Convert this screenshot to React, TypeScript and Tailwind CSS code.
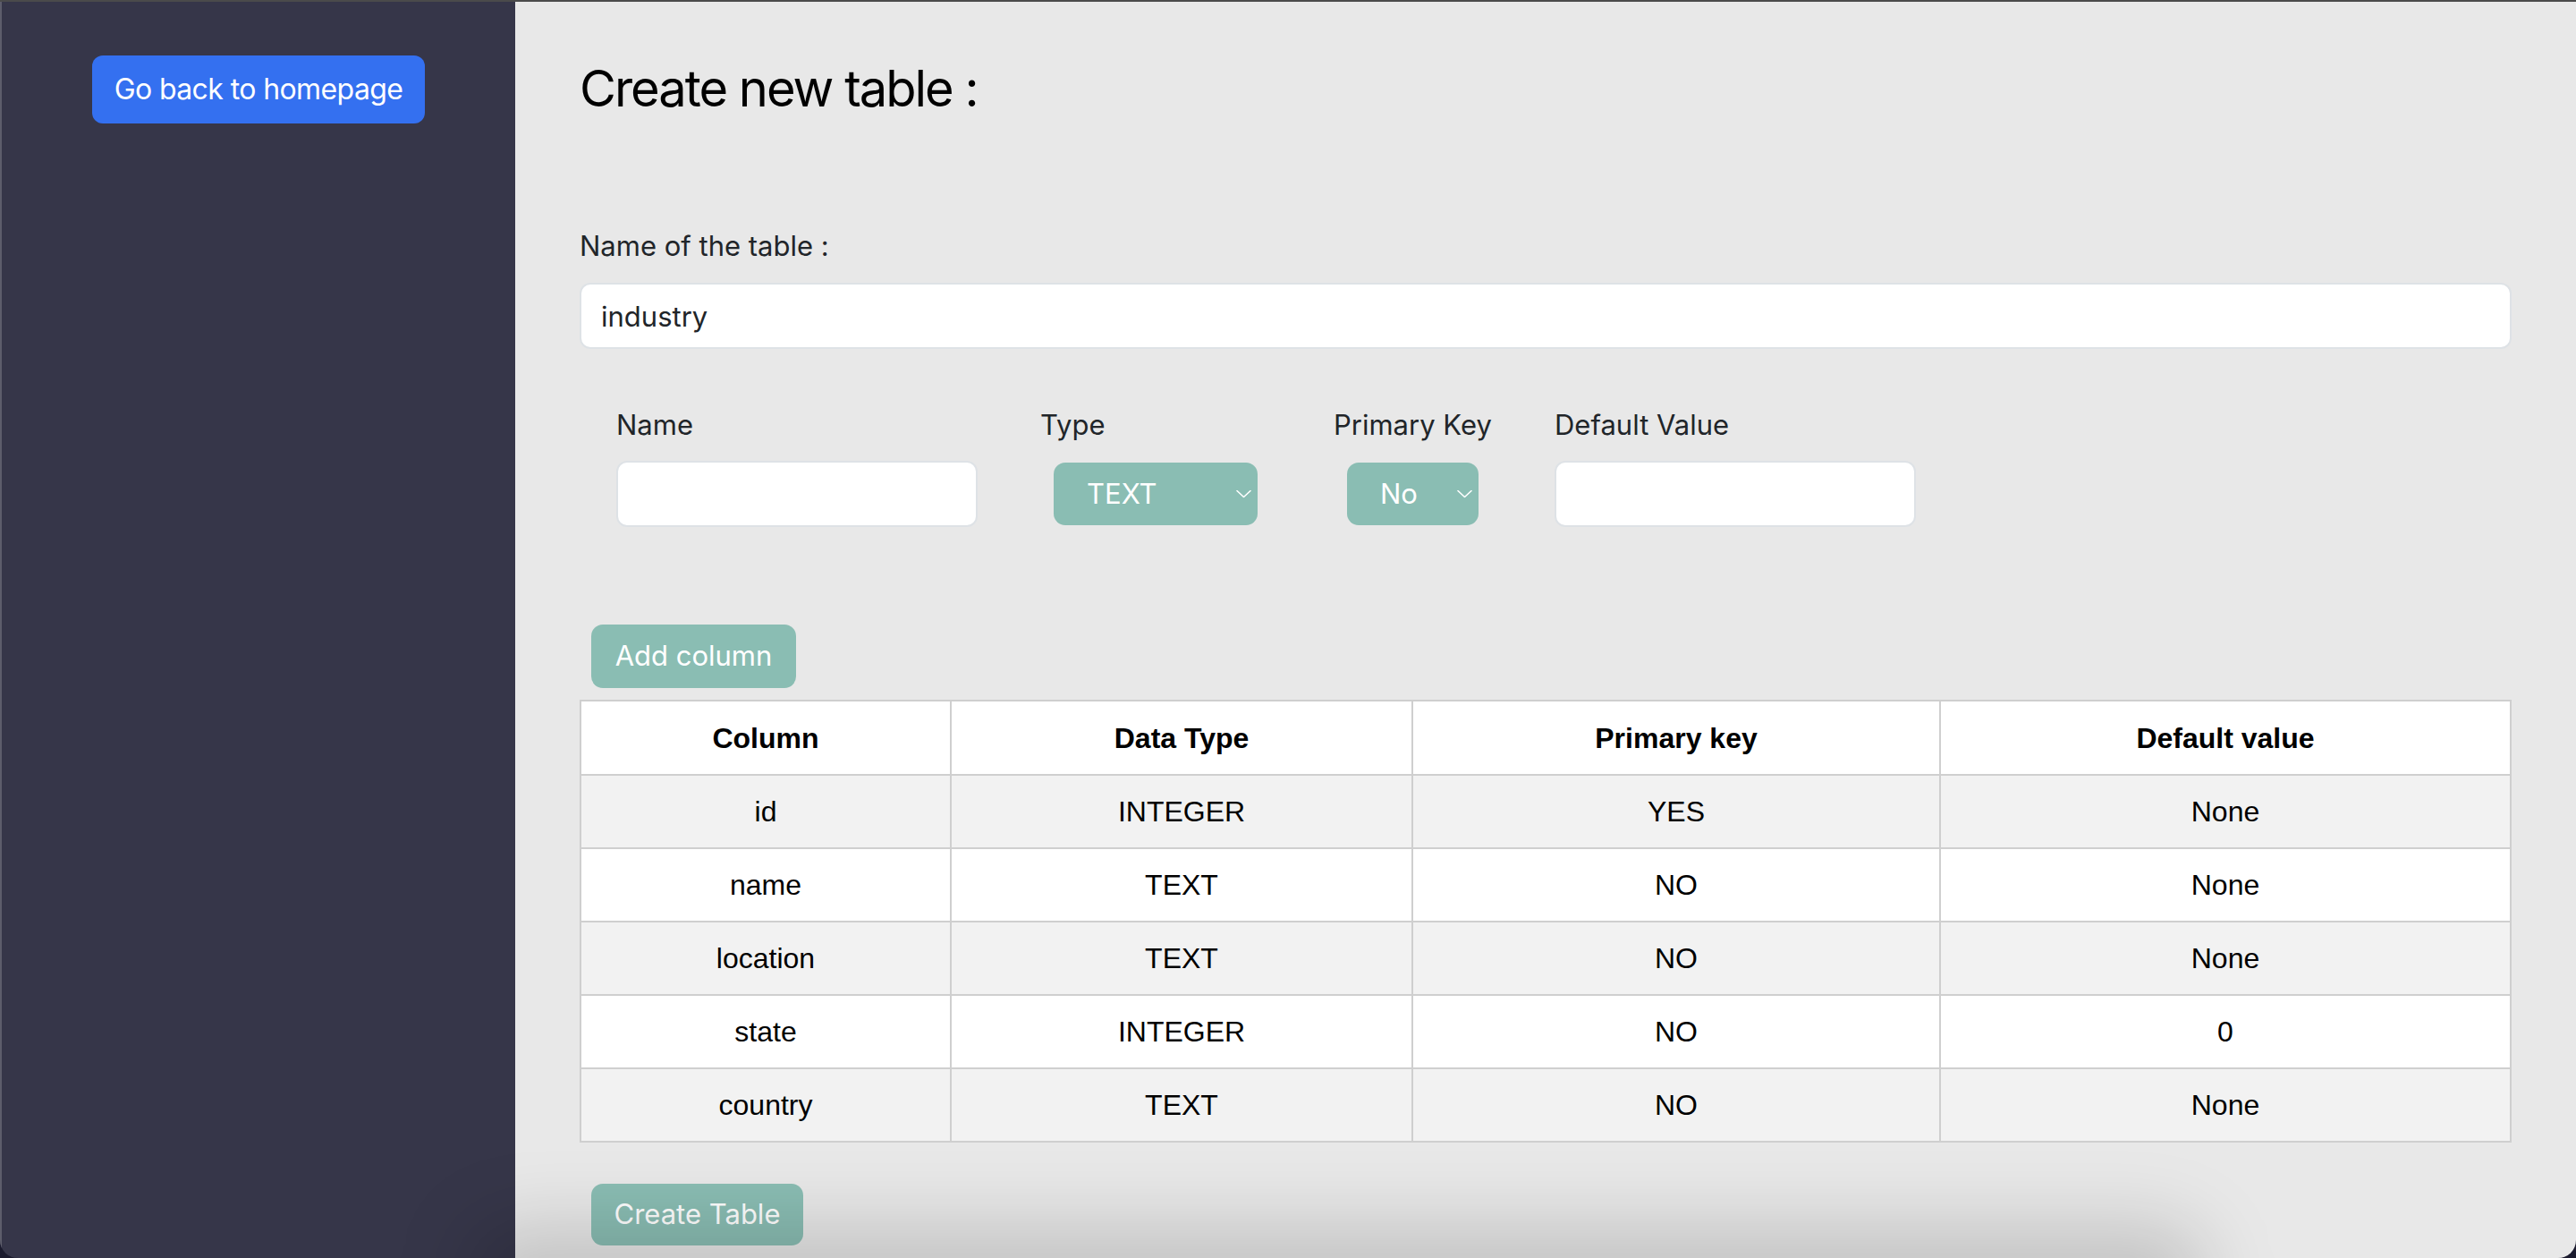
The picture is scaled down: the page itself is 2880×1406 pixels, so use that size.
import { useState } from "react";

type Row = {
  column: string;
  dataType: string;
  primaryKey: string;
  defaultValue: string;
};

const rows: Row[] = [
  { column: "id", dataType: "INTEGER", primaryKey: "YES", defaultValue: "None" },
  { column: "name", dataType: "TEXT", primaryKey: "NO", defaultValue: "None" },
  { column: "location", dataType: "TEXT", primaryKey: "NO", defaultValue: "None" },
  { column: "state", dataType: "INTEGER", primaryKey: "NO", defaultValue: "0" },
  { column: "country", dataType: "TEXT", primaryKey: "NO", defaultValue: "None" },
];

const sans = "font-['Inter','Noto_Sans',sans-serif]";

function Chevron() {
  return (
    <svg
      className="pointer-events-none absolute right-[7px] top-1/2 h-[9px] w-[17px] -translate-y-1/2"
      fill="none"
      stroke="white"
      strokeLinecap="round"
      strokeLinejoin="round"
      strokeWidth="1.6"
      viewBox="0 0 17 9"
    >
      <path d="M1 1l7.5 7L16 1" />
    </svg>
  );
}

type SelectProps = {
  className: string;
  options: string[];
  value: string;
  onChange: (value: string) => void;
};

function TealSelect({ className, options, value, onChange }: SelectProps) {
  return (
    <div className={`relative mx-[15px] h-[70px] ${className}`}>
      <select
        className="h-full w-full appearance-none rounded-[13px] bg-[#8abdb3] pl-[37px] text-[31px] text-white outline-none"
        onChange={(event) => onChange(event.target.value)}
        value={value}
      >
        {options.map((option) => (
          <option key={option} value={option}>
            {option}
          </option>
        ))}
      </select>
      <Chevron />
    </div>
  );
}

export default function App() {
  const [tableName, setTableName] = useState("industry");
  const [colName, setColName] = useState("");
  const [colType, setColType] = useState("TEXT");
  const [primary, setPrimary] = useState("No");
  const [defaultValue, setDefaultValue] = useState("");

  return (
    <div className={`h-[1406px] w-full bg-[#1b1b2e] ${sans}`}>
      <div className="relative flex h-full overflow-hidden rounded-b-[20px] border-t-2 border-[#4b4b4b]">
        <aside className="flex w-[576px] shrink-0 justify-center border-l-2 border-[#5d5d6b] bg-[#363649] pt-[60px]">
          <button
            className="h-[76px] w-[372px] rounded-[12px] bg-[#3470f0] text-[32px] tracking-[-0.6px] text-white"
            type="button"
          >
            Go back to homepage
          </button>
        </aside>

        <main className="flex-1 bg-[#e8e8e8] pl-[72px] pr-[72px] pt-[64px] text-[#212529]">
          <h1 className="text-[56px] leading-[1.2] tracking-[-2px] text-black">Create new table :</h1>

          <label className="mt-[118px] block text-[31px] leading-[48px]" htmlFor="table-name">
            Name of the table :
          </label>
          <input
            className="mt-[17px] h-[74px] w-full rounded-[12px] border-2 border-[#dee2e6] bg-white px-[22px] text-[31px] outline-none"
            id="table-name"
            onChange={(event) => setTableName(event.target.value)}
            value={tableName}
          />

          <div className="mt-[61px] flex gap-[70px] pl-[41px]">
            <div>
              <p className="mb-[16px] text-[31px] leading-[48px]">Name</p>
              <input
                className="h-[74px] w-[404px] rounded-[12px] border-2 border-[#dee2e6] bg-white px-[22px] text-[31px] outline-none"
                onChange={(event) => setColName(event.target.value)}
                value={colName}
              />
            </div>
            <div>
              <p className="mb-[16px] text-[31px] leading-[48px]">Type</p>
              <div className="flex h-[74px] items-center">
                <TealSelect
                  className="w-[228px]"
                  onChange={setColType}
                  options={["TEXT", "INTEGER", "REAL", "BLOB"]}
                  value={colType}
                />
              </div>
            </div>
            <div>
              <p className="mb-[16px] text-[31px] leading-[48px]">Primary Key</p>
              <div className="flex h-[74px] items-center">
                <TealSelect className="w-[147px]" onChange={setPrimary} options={["No", "Yes"]} value={primary} />
              </div>
            </div>
            <div>
              <p className="mb-[16px] text-[31px] leading-[48px]">Default Value</p>
              <input
                className="h-[74px] w-[404px] rounded-[12px] border-2 border-[#dee2e6] bg-white px-[22px] text-[31px] outline-none"
                onChange={(event) => setDefaultValue(event.target.value)}
                value={defaultValue}
              />
            </div>
          </div>

          <button
            className="ml-[13px] mt-[109px] h-[71px] w-[229px] rounded-[13px] bg-[#8abdb3] text-[31px] text-white"
            type="button"
          >
            Add column
          </button>

          <table className="mt-[13px] w-full border-collapse border-2 border-[#cfcfcf] font-['Liberation_Sans',Arial,sans-serif] text-[32px] text-black">
            <thead>
              <tr className="h-[83px] bg-white">
                <th className="w-[414px] border-2 border-[#cfcfcf]">Column</th>
                <th className="w-[516px] border-2 border-[#cfcfcf]">Data Type</th>
                <th className="w-[590px] border-2 border-[#cfcfcf]">Primary key</th>
                <th className="border-2 border-[#cfcfcf]">Default value</th>
              </tr>
            </thead>
            <tbody>
              {rows.map((row, index) => (
                <tr className={`h-[82px] ${index % 2 === 0 ? "bg-[#f2f2f2]" : "bg-white"}`} key={row.column}>
                  <td className="border-2 border-[#cfcfcf] text-center">{row.column}</td>
                  <td className="border-2 border-[#cfcfcf] text-center">{row.dataType}</td>
                  <td className="border-2 border-[#cfcfcf] text-center">{row.primaryKey}</td>
                  <td className="border-2 border-[#cfcfcf] text-center">{row.defaultValue}</td>
                </tr>
              ))}
            </tbody>
          </table>

          <button
            className="ml-[13px] mt-[46px] h-[69px] w-[237px] rounded-[13px] bg-[#8abdb3] text-[31px] text-white"
            type="button"
          >
            Create Table
          </button>
        </main>

        {/* soft shadow cast along the bottom edge */}
        <div className="pointer-events-none absolute -bottom-[80px] left-[520px] h-[120px] w-[1950px] rounded-full bg-black/15 blur-[40px]" />
      </div>
    </div>
  );
}
